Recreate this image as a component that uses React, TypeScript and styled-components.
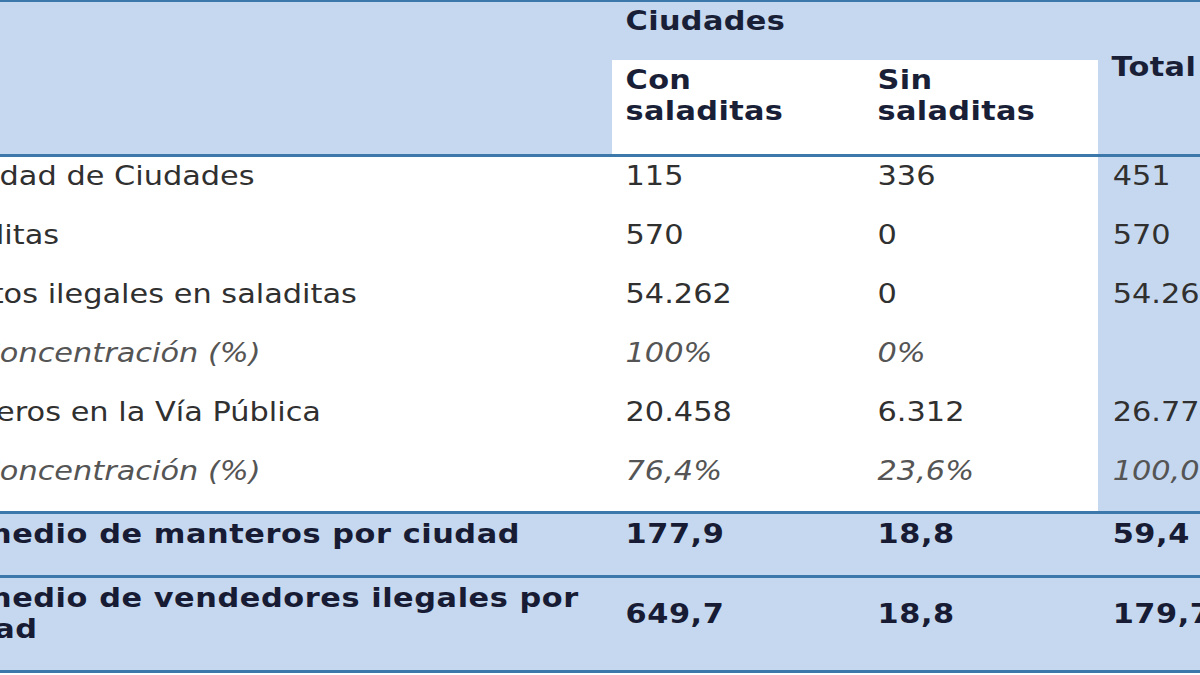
import React from "react";
import styled, { createGlobalStyle } from "styled-components";

const Global = createGlobalStyle`
  html, body {
    margin: 0;
    padding: 0;
    background: #ffffff;
  }
`;

// the shot is stretched sideways; 1.125 keeps column edges on whole pixels
const STRETCH = 1.125;
const BLUE = "#c6d8ef";
const LINE = "#3d78aa";

const Viewport = styled.div`
  width: 1200px;
  height: 675px;
  overflow: hidden;
  background: #ffffff;
`;

const Stretch = styled.div`
  width: ${Math.ceil(1200 / STRETCH)}px;
  transform: scaleX(${STRETCH});
  transform-origin: left top;
`;

const Table = styled.table`
  border-collapse: collapse;
  table-layout: fixed;
  width: 1279px;
  margin-left: -83px;
  margin-top: -1px;
  font-family: "DejaVu Sans", Verdana, sans-serif;
  font-size: 27px;
  line-height: 31px;
  color: #303030;
  border-top: 3px solid ${LINE};
`;

const HeadRow = styled.tr`
  background: ${BLUE};
`;

const HeadCell = styled.th<{ $white?: boolean; $pb?: number; $pt?: number }>`
  text-align: left;
  vertical-align: top;
  font-weight: bold;
  letter-spacing: 0.3px;
  color: #1a1f38;
  padding: ${(p) => p.$pt ?? 3}px 12px ${(p) => p.$pb ?? 24}px;
  background: ${(p) => (p.$white ? "#ffffff" : "transparent")};
`;

const Body = styled.tbody`
  border-top: 3px solid ${LINE};
`;

const Row = styled.tr<{ $strong?: boolean }>`
  background: ${(p) => (p.$strong ? BLUE : "#ffffff")};
  border-top: ${(p) => (p.$strong ? `3px solid ${LINE}` : "none")};
  border-bottom: ${(p) => (p.$strong ? `3px solid ${LINE}` : "none")};
  color: ${(p) => (p.$strong ? "#171c34" : "#303030")};
  font-weight: ${(p) => (p.$strong ? "bold" : "normal")};
  letter-spacing: ${(p) => (p.$strong ? "0.5px" : "0")};
`;

const Cell = styled.td<{
  $italic?: boolean;
  $indent?: boolean;
  $total?: boolean;
  $strong?: boolean;
}>`
  vertical-align: middle;
  padding: ${(p) => (p.$strong ? "4px 12px 26px" : "3px 12px 25px")};
  padding-left: ${(p) => (p.$indent ? 64 : p.$total ? 13 : 12)}px;
  font-style: ${(p) => (p.$italic ? "italic" : "normal")};
  color: ${(p) => (p.$italic ? "#555555" : "inherit")};
  background: ${(p) => (p.$total && !p.$strong ? BLUE : "transparent")};
  white-space: ${(p) => (p.$total ? "nowrap" : "normal")};
  overflow: hidden;
`;

const LabelCell = styled(Cell)`
  vertical-align: top;
`;

type Line = {
  label: string;
  con: string;
  sin: string;
  total: string;
  italic?: boolean;
};

const rows: Line[] = [
  { label: "Cantidad de Ciudades", con: "115", sin: "336", total: "451" },
  { label: "Saladitas", con: "570", sin: "0", total: "570" },
  { label: "Puestos ilegales en saladitas", con: "54.262", sin: "0", total: "54.262" },
  { label: "Concentración (%)", con: "100%", sin: "0%", total: "", italic: true },
  { label: "Manteros en la Vía Pública", con: "20.458", sin: "6.312", total: "26.770" },
  { label: "Concentración (%)", con: "76,4%", sin: "23,6%", total: "100,0%", italic: true },
];

const summary: Line[] = [
  { label: "Promedio de manteros por ciudad", con: "177,9", sin: "18,8", total: "59,4" },
  { label: "Promedio de vendedores ilegales por ciudad", con: "649,7", sin: "18,8", total: "179,7" },
];

const App: React.FC = () => {
  return (
    <>
      <Global />
      <Viewport>
        <Stretch>
          <Table>
            <colgroup>
              <col style={{ width: 627 }} />
              <col style={{ width: 224 }} />
              <col style={{ width: 208 }} />
              <col style={{ width: 220 }} />
            </colgroup>
            <thead>
              <HeadRow>
                <HeadCell rowSpan={2} />
                <HeadCell colSpan={2}>Ciudades</HeadCell>
                <HeadCell rowSpan={2} $pt={49}>
                  Total
                </HeadCell>
              </HeadRow>
              <HeadRow>
                <HeadCell $white $pt={4} $pb={28}>
                  Con saladitas
                </HeadCell>
                <HeadCell $white $pt={4} $pb={28}>
                  Sin saladitas
                </HeadCell>
              </HeadRow>
            </thead>
            <Body>
              {rows.map((r, i) => (
                <Row key={i}>
                  <LabelCell $italic={r.italic} $indent={r.italic}>
                    {r.label}
                  </LabelCell>
                  <Cell $italic={r.italic}>{r.con}</Cell>
                  <Cell $italic={r.italic}>{r.sin}</Cell>
                  <Cell $italic={r.italic} $total>
                    {r.total}
                  </Cell>
                </Row>
              ))}
              {summary.map((r, i) => (
                <Row key={`s${i}`} $strong>
                  <LabelCell $strong>{r.label}</LabelCell>
                  <Cell $strong>{r.con}</Cell>
                  <Cell $strong>{r.sin}</Cell>
                  <Cell $strong $total>
                    {r.total}
                  </Cell>
                </Row>
              ))}
            </Body>
          </Table>
        </Stretch>
      </Viewport>
    </>
  );
};

export default App;
